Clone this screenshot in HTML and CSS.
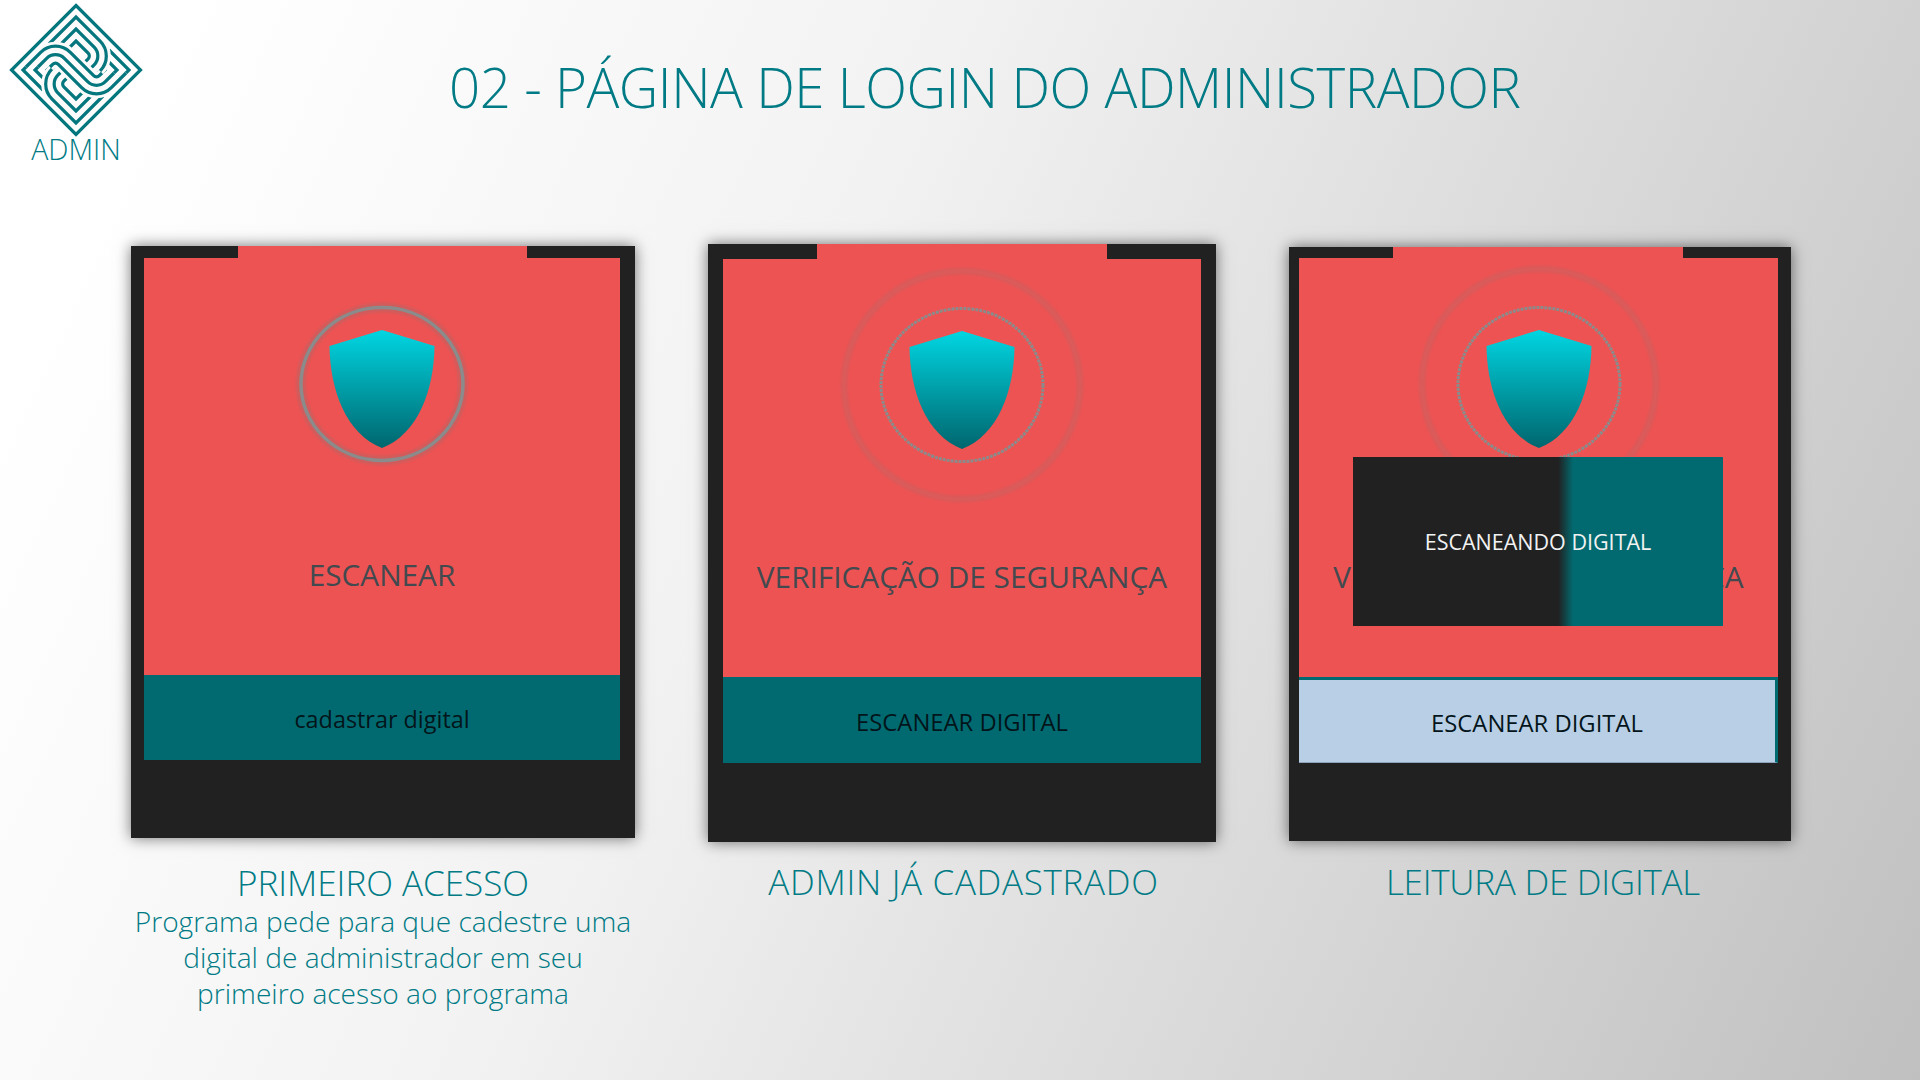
FILE: index.html
```html
<!DOCTYPE html>
<html lang="pt-BR">
    <head>
        <title>02 - Página de login do administrador</title>
        <meta charset="utf-8">
        <link rel="stylesheet" href="styles.css">
    </head>
    <body>
        <svg class="defs" width="0" height="0">
            <defs>
                <linearGradient id="shieldFill" x1="0" y1="0" x2="0" y2="1">
                    <stop offset="0" stop-color="#00d6e2"/>
                    <stop offset="0.45" stop-color="#00a3ad"/>
                    <stop offset="1" stop-color="#00666e"/>
                </linearGradient>
                <path id="shield" d="M0 -54 L52.5 -38 C52 6 36 50 0 64 C-36 50 -52 6 -52.5 -38 Z" fill="url(#shieldFill)"/>
                <g id="bandFull">
                    <path d="M-33 20 L-53 0 L-35.35 -17.65 A21 21 0 0 1 -5.65 -17.65 L17.67 5.67 A4 4 0 0 0 23.33 5.67 L29 0 L21 -8"/>
                    <path d="M-27 14 L-41 0 L-29.34 -11.66 A12.5 12.5 0 0 1 -11.66 -11.66 L11.66 11.66 A12.5 12.5 0 0 0 29.34 11.66 L41 0 L27 -14"/>
                    <path d="M-21 8 L-29 0 L-23.33 -5.67 A4 4 0 0 1 -17.67 -5.67 L5.65 17.65 A21 21 0 0 0 35.35 17.65 L53 0 L33 -20"/>
                </g>
                <g id="bandMain">
                    <path d="M-50 -3 L-35.35 -17.65 A21 21 0 0 1 -5.65 -17.65 L17.67 5.67 A4 4 0 0 0 23.33 5.67 L26 3"/>
                    <path d="M-38 -3 L-29.34 -11.66 A12.5 12.5 0 0 1 -11.66 -11.66 L11.66 11.66 A12.5 12.5 0 0 0 29.34 11.66 L38 3"/>
                    <path d="M-26 -3 L-23.33 -5.67 A4 4 0 0 1 -17.67 -5.67 L5.65 17.65 A21 21 0 0 0 35.35 17.65 L50 3"/>
                </g>
                <g id="chevrons">
                    <path d="M-27 -26 L0 -53 L24.15 -28.85 A21 21 0 0 1 24.15 0.85 L18.5 6.5"/>
                    <path d="M-22 -19 L0 -41 L18.16 -22.84 A12.5 12.5 0 0 1 18.16 -5.16 L12.5 0.5"/>
                    <path d="M-16 -13 L0 -29 L12.17 -16.83 A4 4 0 0 1 12.17 -11.17 L6.5 -5.5"/>
                </g>
            </defs>
        </svg>

        <header class="top">
            <div class="brand">
                <svg class="logo" viewBox="-70 -70 140 140" width="140" height="140">
                    <path class="knot" d="M0 -64.5 L64.5 0 L0 64.5 L-64.5 0 Z"/>
                    <use class="knot" href="#bandFull"/>
                    <use class="halo" href="#chevrons"/>
                    <use class="knot" href="#chevrons"/>
                    <use class="halo" href="#chevrons" transform="rotate(180)"/>
                    <use class="knot" href="#chevrons" transform="rotate(180)"/>
                    <use class="halo" href="#bandMain"/>
                    <use class="knot" href="#bandMain"/>
                </svg>
                <span class="brand-name">ADMIN</span>
            </div>
            <h1 class="title">02 - PÁGINA DE LOGIN DO ADMINISTRADOR</h1>
        </header>

        <main class="shots">
            <section class="shot shot-first">
                <div class="phone">
                    <div class="screen">
                        <svg class="scan" viewBox="-130 -120 260 240" width="260" height="240">
                            <ellipse class="ring-glow" cx="0" cy="0" rx="81" ry="76.5"/>
                            <ellipse class="ring" cx="0" cy="0" rx="81" ry="76.5"/>
                            <use href="#shield"/>
                        </svg>
                        <p class="label">ESCANEAR</p>
                    </div>
                    <div class="action action-lower">cadastrar digital</div>
                </div>
                <h2 class="caption">PRIMEIRO ACESSO</h2>
                <p class="note">Programa pede para que cadestre uma<br>digital de administrador em seu<br>primeiro acesso ao programa</p>
            </section>

            <section class="shot shot-known">
                <div class="phone">
                    <div class="screen">
                        <svg class="scan" viewBox="-130 -120 260 240" width="260" height="240">
                            <ellipse class="wave" cx="0" cy="0" rx="118" ry="114"/>
                            <ellipse class="ring ring-thin" cx="0" cy="0" rx="81" ry="76.5"/>
                            <use href="#shield"/>
                        </svg>
                        <p class="label">VERIFICAÇÃO DE SEGURANÇA</p>
                    </div>
                    <div class="action">ESCANEAR DIGITAL</div>
                </div>
                <h2 class="caption">ADMIN JÁ CADASTRADO</h2>
            </section>

            <section class="shot shot-reading">
                <div class="phone">
                    <div class="screen">
                        <svg class="scan" viewBox="-130 -120 260 240" width="260" height="240">
                            <ellipse class="wave" cx="0" cy="0" rx="117" ry="115"/>
                            <ellipse class="ring ring-thin" cx="0" cy="0" rx="81" ry="76.5"/>
                            <use href="#shield"/>
                        </svg>
                        <p class="label">VERIFICAÇÃO DE SEGURANÇA</p>
                        <div class="progress">ESCANEANDO DIGITAL</div>
                    </div>
                    <div class="action action-pressed">ESCANEAR DIGITAL</div>
                </div>
                <h2 class="caption">LEITURA DE DIGITAL</h2>
            </section>
        </main>
    </body>
</html>
```

FILE: styles.css
```css
html, body {
    margin: 0;
    height: 100%;
}

body {
    height: 1080px;
    overflow: hidden;
    font-family: "Open Sans", "Liberation Sans", sans-serif;
    color: #007b85;
    background: linear-gradient(115deg, #ffffff 8%, #f2f2f2 40%, #c0c0c0 100%);
}

.defs {
    position: absolute;
}

/* header */
.top {
    display: flex;
    height: 244px;
}

.brand {
    display: flex;
    flex-direction: column;
    align-items: center;
    width: 152px;
    flex: none;
}

.logo {
    flex: none;
    display: block;
}

.knot {
    fill: none;
    stroke: #04767d;
    stroke-width: 3.2;
}

.halo {
    fill: none;
    stroke: #fbfbfb;
    stroke-width: 9;
}

.brand-name {
    font-size: 28.5px;
    font-weight: 300;
    line-height: 30px;
    margin-top: -6px;
}

.title {
    margin: 47px 0 0 297px;
    font-size: 54.6px;
    font-weight: 300;
    line-height: 80px;
    white-space: nowrap;
    letter-spacing: -0.45px;
}

/* the three screens */
.shots {
    display: flex;
    gap: 73px;
    padding-left: 131px;
}

.shot {
    display: flex;
    flex-direction: column;
    align-items: center;
    flex: none;
}

.shot-first { width: 504px; padding-top: 2px; }
.shot-known { width: 508px; }
.shot-reading { width: 502px; padding-top: 3px; }

.phone {
    position: relative;
    display: flex;
    flex-direction: column;
    box-sizing: border-box;
    width: 100%;
    background: #212121;
    box-shadow: 0 0 14px rgba(0, 0, 0, 0.55);
}

.shot-first .phone { height: 592px; padding: 12px 15px 0 13px; }
.shot-known .phone { height: 598px; padding: 15px 15px 0 15px; }
.shot-reading .phone { height: 594px; padding: 11px 13px 0 10px; }

/* red tab that sticks up over the dark frame */
.phone::before {
    content: "";
    position: absolute;
    top: 0;
    height: 16px;
    background: #ee5353;
}

.shot-first .phone::before { left: 107px; width: 289px; }
.shot-known .phone::before { left: 109px; width: 290px; }
.shot-reading .phone::before { left: 104px; width: 290px; }

.screen {
    position: relative;
    display: flex;
    flex-direction: column;
    align-items: center;
    background: #ee5353;
}

.shot-first .screen { height: 417px; }
.shot-known .screen { height: 418px; }
.shot-reading .screen { height: 419px; }

.scan {
    flex: none;
    margin-top: 6px;
}

.ring {
    fill: none;
    stroke: #8b8b8b;
    stroke-width: 3.5;
}

.ring-thin {
    stroke-width: 3;
    stroke-dasharray: 3 1;
}

.ring-glow {
    fill: none;
    stroke: rgba(120, 120, 120, 0.25);
    stroke-width: 10;
    filter: blur(1px);
}

.wave {
    fill: none;
    stroke: rgba(125, 125, 125, 0.17);
    stroke-width: 7;
    filter: blur(0.8px);
}

.label {
    margin: 52px 0 0;
    font-size: 29.8px;
    line-height: 40px;
    white-space: nowrap;
    color: #424a4f;
}

.shot-first .label { margin-top: 51px; }
.shot-reading .label { margin-top: 53px; }

.action {
    display: flex;
    align-items: center;
    justify-content: center;
    box-sizing: border-box;
    height: 86px;
    padding-top: 3px;
    font-size: 23.8px;
    font-weight: 500;
    color: #03151a;
    background: #016a70;
}

.shot-first .action { height: 85px; }

.action-lower {
    padding-top: 3px;
    font-size: 23.4px;
}

.action-pressed {
    background: #b9cfe6;
    border-top: 3px solid #016a70;
    border-right: 3px solid #016a70;
    border-bottom: 1px solid #8fa3bb;
}

/* loading box over the card */
.progress {
    position: absolute;
    left: 54px;
    top: 199px;
    display: flex;
    align-items: center;
    justify-content: center;
    width: 370px;
    height: 169px;
    font-size: 21.5px;
    color: #f2f2f2;
    background: linear-gradient(90deg, #212121 55.5%, #016a70 59.5%);
}

.caption {
    margin: 20px 0 0;
    font-size: 35px;
    font-weight: 300;
    line-height: 50px;
    white-space: nowrap;
}

.shot-known .caption {
    margin: 15px 0 0 3px;
    letter-spacing: 0.7px;
}

.shot-reading .caption {
    margin: 16px 0 0 6px;
    letter-spacing: -0.25px;
}

.note {
    margin: -5px 0 0;
    font-size: 28.1px;
    font-weight: 300;
    line-height: 36px;
    text-align: center;
    white-space: nowrap;
}
```
